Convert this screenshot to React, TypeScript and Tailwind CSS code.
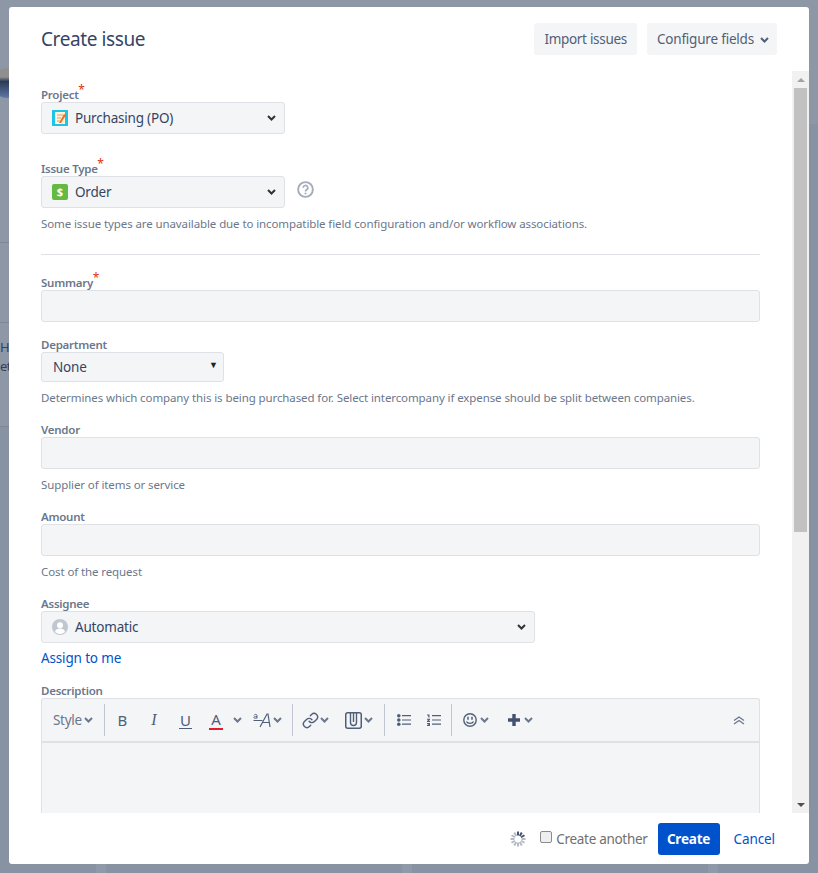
import React from 'react';
import { Link } from 'lucide-react';

const Label = ({ children, required }: { children: React.ReactNode; required?: boolean }) => (
  <div className="h-[16px] pt-[1px] text-[11.5px] leading-[16px] font-semibold tracking-[-0.25px] text-[#6b778c] relative w-fit">
    {children}
    {required && <span className="absolute -right-[6px] -top-[4px] text-[#de350b] text-[12px] font-normal">*</span>}
  </div>
);

const Hint = ({ children }: { children: React.ReactNode }) => (
  <div className="text-[11.5px] leading-[16px] tracking-[-0.1px] text-[#6b778c]">{children}</div>
);

const TextBox = () => <div className="h-[32px] rounded-[3px] border border-[#dfe1e6] bg-[#f4f5f7]" />;

const Chevron = ({ color = '#6b778c' }: { color?: string }) => (
  <svg width="9" height="6" viewBox="0 0 9 6" fill="none" className="shrink-0">
    <path d="M1 1l3.5 3.5L8 1" stroke={color} strokeWidth="2" />
  </svg>
);

const Select = ({ icon, text, width }: { icon: React.ReactNode; text: string; width: string }) => (
  <div className={`${width} h-[32px] rounded-[3px] border border-[#dfe1e6] bg-[#f4f5f7] flex items-center pl-[10px] pr-[8px]`}>
    {icon}
    <span className="ml-[7px] pt-[1px] text-[13.5px] tracking-[-0.2px] text-[#344563] flex-1">{text}</span>
    <Chevron color="#333333" />
  </div>
);

const Sep = () => <div className="w-px h-[32px] bg-[#c1c7d0] shrink-0" />;

export default function App() {
  return (
    <div className="h-[873px] w-[818px] bg-[#8792a2] relative overflow-hidden [font-family:'Noto_Sans','Open_Sans',sans-serif]">
      {/* page behind the dialog */}
      <div className="absolute inset-x-0 top-0 h-[124px] bg-[#8d97a6]" />
      <div className="absolute left-0 top-[124px] w-[9px] h-[302px] bg-[#8d97a6]" />
      <div className="absolute left-[-8px] top-[68px] w-[30px] h-[30px] rounded-full bg-[linear-gradient(#8f8f8f_30%,#2c3a55_45%,#5f78a8)]" />
      <div className="absolute left-0 top-[242px] w-[9px] h-px bg-[#7c8798]" />
      <div className="absolute left-0 top-[322px] w-[9px] h-px bg-[#7c8798]" />
      <div className="absolute left-0 top-[426px] w-[9px] h-px bg-[#7c8798]" />
      <div className="absolute left-0 top-[338px] text-[13px] leading-[19px] tracking-[-0.5px] text-[#33415c]">He<br />et</div>
      <div className="absolute left-[96px] top-[864px] w-[10px] h-[9px] bg-[#8f99a8]" />
      <div className="absolute left-[402px] top-[864px] w-[10px] h-[9px] bg-[#8f99a8]" />
      <div className="absolute left-[708px] top-[864px] w-[10px] h-[9px] bg-[#8f99a8]" />

      <div className="absolute left-[9px] top-[7px] w-[800px] h-[857px] bg-white rounded-[3px] flex flex-col">
        <div className="h-[64px] shrink-0 flex items-start justify-between pt-[16px] px-[32px]">
          <h2 className="text-[19px] leading-[32px] tracking-[-0.4px] text-[#344563]">Create issue</h2>
          <div className="flex gap-[10px]">
            <div className="h-[32px] px-[10px] pt-[1px] rounded-[3px] bg-[#f4f5f7] text-[#505f79] text-[13.5px] tracking-[-0.3px] flex items-center">Import issues</div>
            <div className="h-[32px] pl-[10px] pr-[8px] pt-[1px] rounded-[3px] bg-[#f4f5f7] text-[#505f79] text-[13.5px] tracking-[-0.2px] flex items-center gap-[6px]">
              Configure fields <Chevron color="#505f79" />
            </div>
          </div>
        </div>

        <div className="flex-1 min-h-0 flex relative">
          <div className="flex-1 pl-[32px] pr-[49px] overflow-hidden pt-[15px]">
            <Label required>Project</Label>
            <Select
              width="w-[244px]"
              text="Purchasing (PO)"
              icon={
                <svg width="16" height="16" viewBox="0 0 16 16" className="shrink-0">
                  <rect width="16" height="16" fill="#1cc5e8" />
                  <rect x="3" y="2" width="10" height="12" fill="#fff3dc" />
                  <path d="M5 5h6M5 8h4M5 11h3" stroke="#d9a066" />
                  <path d="M7 13l5-9 2 1-5 8z" fill="#f26b21" />
                </svg>
              }
            />
            <div className="mt-[26px]">
              <Label required>Issue Type</Label>
            </div>
            <div className="flex items-start">
              <Select
                width="w-[244px]"
                text="Order"
                icon={
                  <div className="w-[16px] h-[16px] shrink-0 rounded-[2px] bg-[#65ba43] text-white text-[11px] leading-[16px] font-bold text-center">$</div>
                }
              />
              <svg className="ml-[12px] mt-[5px]" width="17" height="17" viewBox="0 0 18 18" fill="none">
                <circle cx="9" cy="9" r="7.8" stroke="#a5adba" strokeWidth="2" />
                <path d="M6.6 7.2a2.4 2.4 0 1 1 3.6 2c-.8.5-1.2.9-1.2 1.8" stroke="#a5adba" strokeWidth="1.8" />
                <circle cx="9" cy="13.2" r="1.1" fill="#a5adba" />
              </svg>
            </div>
            <div className="mt-[8px]"><Hint>Some issue types are unavailable due to incompatible field configuration and/or workflow associations.</Hint></div>
            <div className="h-px bg-[#dfe1e6] mt-[22px]" />

            <div className="mt-[19px]"><Label required>Summary</Label></div>
            <TextBox />

            <div className="mt-[14px]"><Label>Department</Label></div>
            <div className="w-[183px] h-[30px] rounded-[3px] border border-[#dfe1e6] bg-[#f4f5f7] flex items-center pl-[11px] pr-[5px]">
              <span className="flex-1 pt-[1px] text-[13.5px] tracking-[-0.2px] text-[#344563]">None</span>
              <span className="text-[9px] text-[#222] -mt-[4px]">▼</span>
            </div>
            <div className="mt-[8px]"><Hint>Determines which company this is being purchased for. Select intercompany if expense should be split between companies.</Hint></div>

            <div className="mt-[15px]"><Label>Vendor</Label></div>
            <TextBox />
            <div className="mt-[8px]"><Hint>Supplier of items or service</Hint></div>

            <div className="mt-[15px]"><Label>Amount</Label></div>
            <TextBox />
            <div className="mt-[8px]"><Hint>Cost of the request</Hint></div>

            <div className="mt-[15px]"><Label>Assignee</Label></div>
            <Select
              width="w-[494px]"
              text="Automatic"
              icon={
                <svg width="16" height="16" viewBox="0 0 16 16" className="shrink-0">
                  <circle cx="8" cy="8" r="8" fill="#c1c7d0" />
                  <circle cx="8" cy="6.2" r="3" fill="#fff" />
                  <path d="M3 13c.6-2.4 2.6-3.4 5-3.4s4.4 1 5 3.4a8 8 0 0 1-10 0z" fill="#fff" />
                </svg>
              }
            />
            <div className="mt-[5px] text-[13.5px] tracking-[-0.15px] leading-[20px] text-[#0052cc]">Assign to me</div>

            <div className="mt-[14px]"><Label>Description</Label></div>
            <div className="rounded-t-[3px] border border-[#dfe1e6] border-b-0 bg-[#f4f5f7] h-[200px]">
              <div className="h-[44px] border-b-2 border-[#dfe1e6] flex items-center pl-[11px] pr-[14px] text-[#505f79]">
                <span className="w-[29px] text-[13.5px] tracking-[-0.3px] text-[#6b778c]">Style</span>
                <span className="ml-[2px]"><Chevron /></span>
                <div className="ml-[11px]"><Sep /></div>
                <span className="ml-[12px] w-[11px] text-[15px] text-center">B</span>
                <span className="ml-[22px] w-[8px] text-[16px] text-center italic [font-family:'Liberation_Serif',serif]">I</span>
                <span className="ml-[21px] w-[13px] text-[15px] leading-[16px] text-center border-b border-[#505f79]">U</span>
                <span className="ml-[17px] w-[14px] text-[15px] leading-[17px] text-center border-b-[2px] border-[#e01e2e]">A</span>
                <span className="ml-[10px]"><Chevron /></span>
                <svg className="ml-[11px] shrink-0" width="20" height="16" viewBox="0 0 20 16" fill="none" stroke="#505f79">
                  <path d="M0.5 8.5h9" strokeWidth="1" />
                  <path d="M1 3.5c.5-1.5 3-1.5 3 0V6.5M4 4.5C1.5 4.5 .8 5 .8 5.6s1.5 1.2 3.2 0" strokeWidth="0.9" />
                  <path d="M7 15L14 2h1l2 13M9.5 10.500h7" strokeWidth="1.2" />
                </svg>
                <span className="ml-[0px]"><Chevron /></span>
                <div className="ml-[10px]"><Sep /></div>
                <Link size={17} className="ml-[9px] shrink-0" />
                <span className="ml-[1px]"><Chevron /></span>
                <svg className="ml-[16px] shrink-0" width="17" height="17" viewBox="0 0 17 17" fill="none" stroke="#505f79">
                  <rect x="0.750" y="0.750" width="15.500" height="15.500" rx="2" strokeWidth="1.500" />
                  <path d="M5.500 1v9.500a3 3 0 0 0 6 0V1M8.500 1v9" strokeWidth="1.400" />
                </svg>
                <span className="ml-[2px]"><Chevron /></span>
                <div className="ml-[11px]"><Sep /></div>
                <svg className="ml-[12px] shrink-0" width="14" height="12" viewBox="0 0 14 12" fill="#505f79">
                  <circle cx="1.800" cy="1.800" r="1.800" />
                  <circle cx="1.800" cy="6" r="1.800" />
                  <circle cx="1.800" cy="10.200" r="1.800" />
                  <path d="M5 1h9v1.200H5zM5 5.400h9v1.200H5zM5 9.600h9v1.200H5z" />
                </svg>
                <svg className="ml-[16px] shrink-0" width="14" height="12" viewBox="0 0 14 12" fill="#505f79">
                  <path d="M0 .6h2.500v3H1.200V1.600H0zM0 4.800h3v1.100L1.600 7H3v1H0V7l1.500-1.200H0zM0 9h3v3H0v-.9h2v-.3H.8v-.8H2v-.1H0z" />
                  <path d="M5 1h9v1.200H5zM5 5.400h9v1.200H5zM5 9.600h9v1.200H5z" />
                </svg>
                <div className="ml-[10px]"><Sep /></div>
                <svg className="ml-[11px] shrink-0" width="14" height="14" viewBox="0 0 14 14" fill="none" stroke="#505f79">
                  <circle cx="7" cy="7" r="6.200" strokeWidth="1.400" />
                  <path d="M5 3.800v3M9 3.800v3" strokeWidth="1.500" />
                  <path d="M3.500 8.500c1 2.400 6 2.400 7 0" strokeWidth="1.300" />
                </svg>
                <span className="ml-[3px]"><Chevron /></span>
                <svg className="ml-[19px] shrink-0" width="12" height="12" viewBox="0 0 12 12" fill="#42526e">
                  <path d="M4.300 0h3.400v4.300H12v3.400H7.700V12H4.300V7.700H0V4.300h4.300z" />
                </svg>
                <span className="ml-[4px]"><Chevron /></span>
                <svg className="ml-auto shrink-0" width="12" height="9" viewBox="0 0 12 9" fill="none" stroke="#6b778c" strokeWidth="1.300">
                  <path d="M1 4.500L6 1l5 3.500M1 8l5-3.500L11 8" />
                </svg>
              </div>
            </div>
          </div>

          <div className="w-[17px] bg-[#f1f1f1] flex flex-col items-center shrink-0 absolute right-0 top-0 bottom-0">
            <div className="h-[17px] w-full flex items-center justify-center">
              <div className="w-0 h-0 border-x-[4px] border-x-transparent border-b-[4px] border-b-[#a3a3a3]" />
            </div>
            <div className="w-[13px] h-[444px] bg-[#c1c1c1]" />
            <div className="flex-1" />
            <div className="h-[17px] w-full flex items-center justify-center">
              <div className="w-0 h-0 border-x-[4px] border-x-transparent border-t-[4px] border-t-[#505050]" />
            </div>
          </div>
        </div>

        <div className="h-[51px] shrink-0 flex items-center justify-end pr-[34px]">
          <svg width="16" height="16" viewBox="0 0 16 16" className="mr-[14px]">
            {Array.from({ length: 12 }).map((_, i) => (
              <line key={i} x1="8" y1="0.500" x2="8" y2="4.500" strokeWidth="2" stroke={i < 3 ? '#42526e' : '#b3bac5'} transform={`rotate(${i * 30} 8 8)`} />
            ))}
          </svg>
          <span className="w-[12px] h-[12px] rounded-[2px] border border-[#8c8c8c] bg-[#efefef] mr-[4px] -mt-[3px]" />
          <span className="pt-[1px] text-[13.5px] tracking-[-0.3px] text-[#707070] mr-[10px]">Create another</span>
          <div className="h-[32px] w-[62px] pt-[1px] rounded-[3px] bg-[#0052cc] text-white text-[13.5px] font-bold tracking-[-0.2px] flex items-center justify-center">Create</div>
          <span className="ml-[14px] pt-[1px] text-[13.5px] tracking-[-0.1px] text-[#0052cc]">Cancel</span>
        </div>
      </div>
    </div>
  );
}
